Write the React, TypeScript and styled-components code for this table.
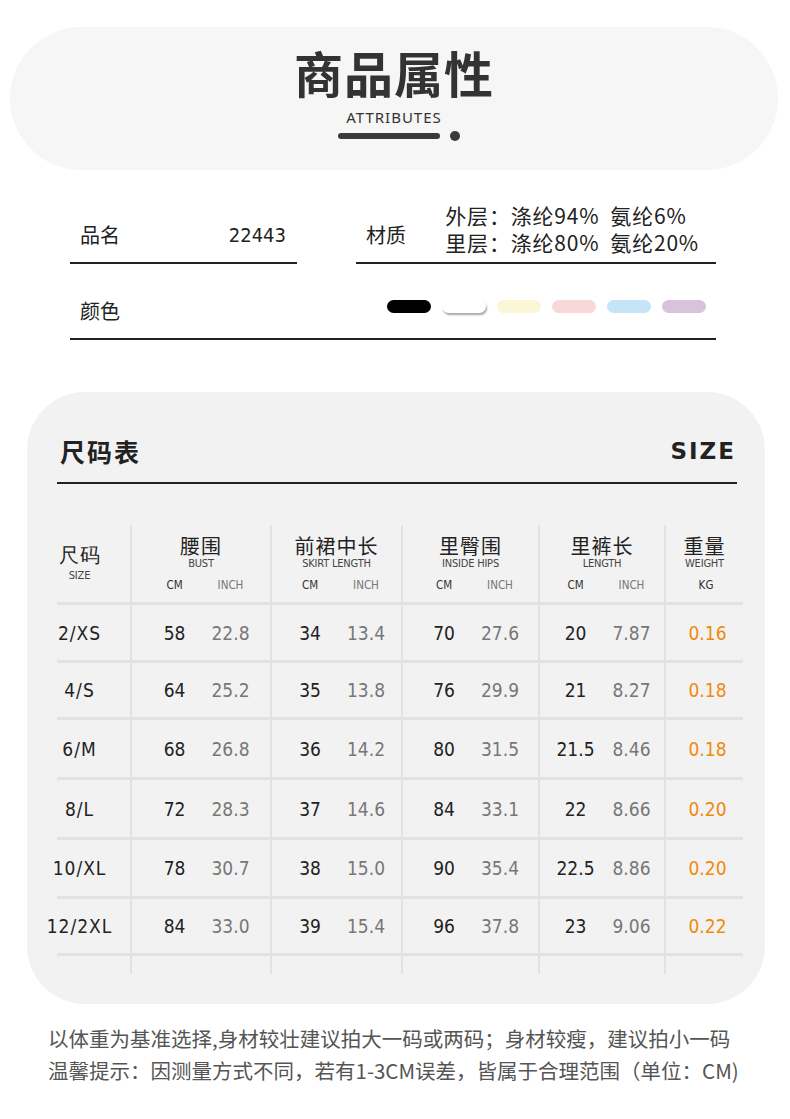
import React from 'react';
import styled, { createGlobalStyle } from 'styled-components';

const GlobalStyle = createGlobalStyle`
  html, body {
    margin: 0;
    padding: 0;
    background: #ffffff;
  }
  body {
    width: 790px;
    font-family: "Noto Sans CJK SC", "Noto Sans", sans-serif;
    color: #222;
  }
`;

const Page = styled.div`
  width: 790px;
  padding-top: 27px;
  padding-bottom: 30px;
`;

/* ---------- header pill ---------- */

const HeaderPill = styled.div`
  margin: 0 12px 0 10px;
  height: 143px;
  border-radius: 72px;
  background: #f6f6f6;
  display: flex;
  flex-direction: column;
  align-items: center;
`;

const HeaderTitle = styled.h1`
  margin: 13px 0 0;
  font-size: 49px;
  line-height: 64px;
  font-weight: 700;
  color: #333;
  letter-spacing: 1px;
`;

const HeaderSub = styled.div`
  margin-top: 4px;
  font-family: "Noto Sans", sans-serif;
  font-size: 15px;
  line-height: 18px;
  letter-spacing: 1px;
  color: #333;
`;

const HeaderMark = styled.div`
  margin-top: 5px;
  display: flex;
  align-items: center;
  gap: 10px;
  margin-left: 10px;
`;

const MarkBar = styled.span`
  width: 102px;
  height: 6px;
  border-radius: 3px;
  background: #3a3a3a;
`;

const MarkDot = styled.span`
  width: 10px;
  height: 10px;
  border-radius: 50%;
  background: #3a3a3a;
`;

/* ---------- attributes ---------- */

const Attrs = styled.div`
  margin: 0 74px 0 70px;
  display: flex;
  flex-direction: column;
`;

const AttrRow = styled.div`
  display: flex;
  justify-content: space-between;
`;

const Field = styled.div<{ $width: number; $height: number }>`
  width: ${p => p.$width}px;
  height: ${p => p.$height}px;
  box-sizing: border-box;
  border-bottom: 2px solid #222;
  display: flex;
  align-items: center;
  justify-content: space-between;
  padding: 0 11px 0 10px;
  font-size: 20px;
  color: #222;
`;

const Label = styled.span`
  line-height: 28px;
`;

const Code = styled.span`
  font-family: "DejaVu Sans Condensed", "DejaVu Sans", sans-serif;
  font-size: 20px;
`;

const Material = styled.div`
  display: flex;
  flex-direction: column;
  margin-right: 6px;
  font-size: 21px;
  line-height: 27px;
  letter-spacing: 0.8px;
  color: #222;
  margin-top: -12px;
`;

const Swatches = styled.div`
  display: flex;
  gap: 11px;
  margin-right: -1px;
`;

const Swatch = styled.span<{ $color: string; $shadow?: boolean }>`
  width: 44px;
  height: 13px;
  border-radius: 7px;
  background: ${p => p.$color};
  box-shadow: ${p => (p.$shadow ? '1px 2px 2px rgba(0,0,0,0.35)' : 'none')};
  margin-top: -10px;
`;

/* ---------- size card ---------- */

const SizeCard = styled.div`
  margin: 52px 25px 0 27px;
  background: #f2f2f2;
  border-radius: 58px;
  padding: 40px 22px 30px 30px;
`;

const SizeHead = styled.div`
  display: flex;
  justify-content: space-between;
  align-items: center;
  padding: 0 1px 12px 3px;
  border-bottom: 2px solid #222;
  margin-right: 6px;
`;

const SizeTitle = styled.h2`
  margin: 0;
  font-size: 25px;
  line-height: 38px;
  font-weight: 700;
  color: #222;
  letter-spacing: 2px;
`;

const SizeLatin = styled.span`
  font-family: "DejaVu Sans", sans-serif;
  font-size: 23px;
  font-weight: 700;
  letter-spacing: 2px;
  color: #222;
`;

const Table = styled.div`
  margin-top: 41px;
  display: grid;
  grid-template-columns: 75px 140px 131px 137px 126px 77px;
  width: 686px;
`;

const Cell = styled.div<{ $height: number; $last?: boolean; $line?: boolean }>`
  height: ${p => p.$height}px;
  box-sizing: border-box;
  border-right: ${p => (p.$last ? 'none' : '2px solid #e2e2e2')};
  border-bottom: ${p => (p.$line ? '3px solid #e2e2e2' : 'none')};
  display: flex;
  flex-direction: column;
  align-items: center;
  justify-content: center;
`;

const SizeCell = styled(Cell)`
  padding-right: 28px;
  font-family: "DejaVu Sans Condensed", "DejaVu Sans", sans-serif;
  font-size: 19px;
  letter-spacing: 1px;
  color: #222;
`;

const HeadCn = styled.div`
  font-size: 20px;
  line-height: 22px;
  color: #222;
  letter-spacing: 1px;
`;

const HeadEn = styled.div`
  font-family: "DejaVu Sans Condensed", "DejaVu Sans", sans-serif;
  font-size: 11px;
  line-height: 14px;
  color: #444;
  letter-spacing: -0.2px;
`;

const UnitRow = styled.div`
  display: flex;
  justify-content: center;
  margin-top: 7px;
  padding-left: 3px;
  font-family: "DejaVu Sans Condensed", "DejaVu Sans", sans-serif;
  font-size: 11.5px;
  line-height: 14px;
`;

const Unit = styled.span<{ $muted?: boolean }>`
  width: 56px;
  text-align: center;
  color: ${p => (p.$muted ? '#777' : '#333')};
`;

const Pair = styled.div`
  display: flex;
  justify-content: center;
  padding-left: 3px;
  font-family: "DejaVu Sans Condensed", "DejaVu Sans", sans-serif;
  font-size: 19px;
`;

const Num = styled.span<{ $muted?: boolean }>`
  width: 56px;
  text-align: center;
  color: ${p => (p.$muted ? '#777' : '#222')};
`;

const Weight = styled.span`
  font-family: "DejaVu Sans Condensed", "DejaVu Sans", sans-serif;
  font-size: 19px;
  color: #f08a0c;
  margin-left: 6px;
`;

/* ---------- notes ---------- */

const Notes = styled.div`
  margin: 18px 0 0 48px;
  font-size: 20.5px;
  line-height: 32px;
  color: #555;
`;

const columns = [
  { cn: '腰围', en: 'BUST' },
  { cn: '前裙中长', en: 'SKIRT LENGTH' },
  { cn: '里臀围', en: 'INSIDE HIPS' },
  { cn: '里裤长', en: 'LENGTH' },
];

const rows = [
  { size: '2/XS', h: 58, vals: [['58', '22.8'], ['34', '13.4'], ['70', '27.6'], ['20', '7.87']], kg: '0.16' },
  { size: '4/S', h: 57, vals: [['64', '25.2'], ['35', '13.8'], ['76', '29.9'], ['21', '8.27']], kg: '0.18' },
  { size: '6/M', h: 60, vals: [['68', '26.8'], ['36', '14.2'], ['80', '31.5'], ['21.5', '8.46']], kg: '0.18' },
  { size: '8/L', h: 60, vals: [['72', '28.3'], ['37', '14.6'], ['84', '33.1'], ['22', '8.66']], kg: '0.20' },
  { size: '10/XL', h: 59, vals: [['78', '30.7'], ['38', '15.0'], ['90', '35.4'], ['22.5', '8.86']], kg: '0.20' },
  { size: '12/2XL', h: 57, vals: [['84', '33.0'], ['39', '15.4'], ['96', '37.8'], ['23', '9.06']], kg: '0.22' },
];

const swatches = ['#000000', '#ffffff', '#fbf6d5', '#f9d8d9', '#c6e4f8', '#d7c4dc'];

const App: React.FC = () => {
  return (
    <>
      <GlobalStyle />
      <Page>
        <HeaderPill>
          <HeaderTitle>商品属性</HeaderTitle>
          <HeaderSub>ATTRIBUTES</HeaderSub>
          <HeaderMark>
            <MarkBar />
            <MarkDot />
          </HeaderMark>
        </HeaderPill>

        <Attrs>
          <AttrRow style={{ marginTop: 37 }}>
            <Field $width={227} $height={57}>
              <Label>品名</Label>
              <Code>22443</Code>
            </Field>
            <Field $width={360} $height={57}>
              <Label>材质</Label>
              <Material>
                <span>外层：涤纶94%&nbsp;&nbsp;氨纶6%</span>
                <span>里层：涤纶80%&nbsp;&nbsp;氨纶20%</span>
              </Material>
            </Field>
          </AttrRow>
          <AttrRow>
            <Field $width={646} $height={76} style={{ paddingTop: 20 }}>
              <Label>颜色</Label>
              <Swatches>
                {swatches.map((c, i) => (
                  <Swatch key={i} $color={c} $shadow={i === 1} />
                ))}
              </Swatches>
            </Field>
          </AttrRow>
        </Attrs>

        <SizeCard>
          <SizeHead>
            <SizeTitle>尺码表</SizeTitle>
            <SizeLatin>SIZE</SizeLatin>
          </SizeHead>

          <Table>
            <SizeCell $height={80} $line>
              <HeadCn>尺码</HeadCn>
              <HeadEn style={{ marginTop: 3 }}>SIZE</HeadEn>
            </SizeCell>
            {columns.map(c => (
              <Cell key={c.cn} $height={80} $line>
                <HeadCn>{c.cn}</HeadCn>
                <HeadEn>{c.en}</HeadEn>
                <UnitRow>
                  <Unit>CM</Unit>
                  <Unit $muted>INCH</Unit>
                </UnitRow>
              </Cell>
            ))}
            <Cell $height={80} $line $last>
              <HeadCn>重量</HeadCn>
              <HeadEn>WEIGHT</HeadEn>
              <UnitRow>
                <Unit>KG</Unit>
              </UnitRow>
            </Cell>

            {rows.map(r => (
              <React.Fragment key={r.size}>
                <SizeCell $height={r.h} $line>{r.size}</SizeCell>
                {r.vals.map((v, i) => (
                  <Cell key={i} $height={r.h} $line>
                    <Pair>
                      <Num>{v[0]}</Num>
                      <Num $muted>{v[1]}</Num>
                    </Pair>
                  </Cell>
                ))}
                <Cell $height={r.h} $line $last>
                  <Weight>{r.kg}</Weight>
                </Cell>
              </React.Fragment>
            ))}

            {[0, 1, 2, 3, 4, 5].map(i => (
              <Cell key={`stub${i}`} $height={18} $last={i === 5} />
            ))}
          </Table>
        </SizeCard>

        <Notes>
          <div>以体重为基准选择,身材较壮建议拍大一码或两码；身材较瘦，建议拍小一码</div>
          <div>温馨提示：因测量方式不同，若有1-3CM误差，皆属于合理范围（单位：CM)</div>
        </Notes>
      </Page>
    </>
  );
};

export default App;
